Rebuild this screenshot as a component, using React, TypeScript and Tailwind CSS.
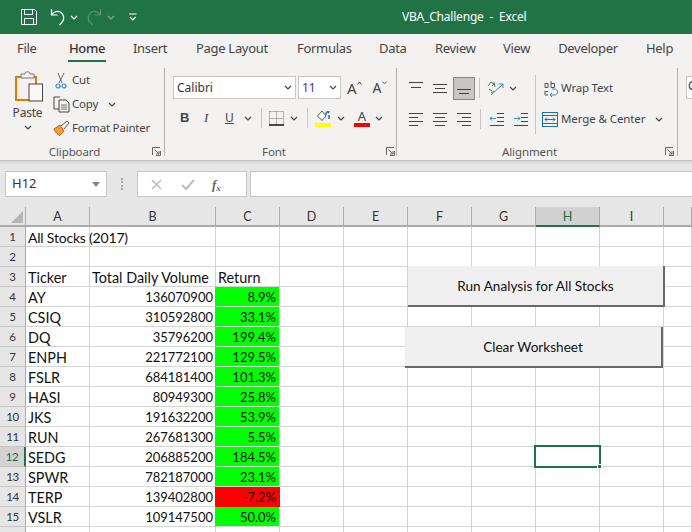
import React from "react";

const ui = "font-['Noto_Sans','Open_Sans',sans-serif]";
const cellFont = "font-['Lato','Noto_Sans',sans-serif]";

const Chev = ({ c = "#444", className = "" }: { c?: string; className?: string }) => (
  <svg width="8" height="5" viewBox="0 0 8 5" className={className}>
    <path d="M1 1l3 3 3-3" fill="none" stroke={c} strokeWidth="1.2" />
  </svg>
);

const Launcher = ({ className = "" }: { className?: string }) => (
  <svg width="9" height="9" viewBox="0 0 9 9" className={className}>
    <path d="M.5 8V.5H8M8.5 4v4.5H4M2.5 2.5L7 7M7 4v3H4" fill="none" stroke="#666" strokeWidth="1" />
  </svg>
);

const TABS = (
  <div className={`flex h-[28px] bg-[#f3f2f1] text-[13px] tracking-[-0.3px] text-[#444] ${ui} items-start`}>
    <div className="w-[52px] pt-[5px] pl-[17px]">File</div>
    <div className="w-[38px] ml-[16px] pt-[5px] h-[28px] text-center relative font-medium text-[#333]">
      Home
      <div className="absolute left-[0px] right-[0px] bottom-[0px] h-[2px] bg-[#217346]" />
    </div>
    <div className="w-[32px] ml-[27px] pt-[5px] text-center">Insert</div>
    <div className="w-[71px] ml-[31px] pt-[5px] text-center whitespace-nowrap">Page Layout</div>
    <div className="w-[53px] ml-[30px] pt-[5px] text-center">Formulas</div>
    <div className="w-[27px] ml-[29px] pt-[5px] text-center">Data</div>
    <div className="w-[40px] ml-[29px] pt-[5px] text-center">Review</div>
    <div className="w-[27px] ml-[28px] pt-[5px] text-center">View</div>
    <div className="w-[60px] ml-[28px] pt-[5px] text-center">Developer</div>
    <div className="w-[27px] ml-[28px] pt-[5px] text-center">Help</div>
  </div>
);

const TitleBar = () => (
  <div className={`h-[34px] bg-[#217346] flex items-center text-white ${ui}`}>
    <svg width="18" height="18" viewBox="0 0 18 18" className="ml-[20px]">
      <path d="M1.5 1.5h13l2 2v13h-15z" fill="none" stroke="#fff" />
      <path d="M4.5 1.5v5h8v-5M4.5 16.5v-6h9v6" fill="none" stroke="#fff" />
    </svg>
    <svg width="17" height="18" viewBox="0 0 17 18" className="ml-[12px]">
      <path d="M1.5 1v6h6M1.5 7C4 3.5 8 2.5 11 4.5c3 2 3.6 6.500 1.500 9l-3 3.500" fill="none" stroke="#fff" strokeWidth="1.200" />
    </svg>
    <Chev c="#fff" className="ml-[3px]" />
    <svg width="17" height="18" viewBox="0 0 17 18" className="ml-[7px] opacity-40">
      <path d="M15.500 1v6h-6M15.500 7C13 3.500 9 2.500 6 4.500c-3 2-3.600 6.500-1.500 9l3 3.500" fill="none" stroke="#a5c7b4" strokeWidth="1.200" />
    </svg>
    <Chev c="#7fae95" className="ml-[5px]" />
    <svg width="8" height="8" viewBox="0 0 8 8" className="ml-[14px]">
      <path d="M0 1h7.500M1 4l2.800 3L6.600 4" fill="none" stroke="#fff" strokeWidth="1.100" />
    </svg>
    <div className="ml-[265px] text-[12px] tracking-[-0.2px] whitespace-pre">VBA_Challenge  -  Excel</div>
  </div>
);

const GroupLabel = ({ children, w }: { children: string; w: string }) => (
  <div className={`${w} text-center text-[11.5px] tracking-[-0.1px] text-[#555] h-[16px] leading-[16px]`}>{children}</div>
);

const Clipboard = () => (
  <div className="w-[165px] shrink-0 h-[88px] border-r border-[#b3b0ad] mt-[6px] flex flex-col">
    <div className="flex h-[76px] shrink-0">
      <div className="w-[55px] flex flex-col items-center pl-[4px]">
        <svg width="30" height="32" viewBox="0 0 30 32" className="mt-[2px]">
          <path d="M1 7h20v23H1z" fill="#fdf0cf" stroke="#d77b16" strokeWidth="2" />
          <rect x="5" y="8" width="15" height="20" fill="#f3f2f1" />
          <path d="M6 8V4h4c0-3 5-3 5 0h4v4z" fill="#f3f2f1" stroke="#777" />
          <rect x="14" y="14" width="13.500" height="17" fill="#f8f8f8" stroke="#444" />
        </svg>
        <div className="text-[12px] tracking-[-0.2px] text-[#444] mt-[3px] leading-[16px] pr-[4px]">Paste</div>
        <Chev className="mt-[4px] mr-[4px]" />
      </div>
      <div className="flex flex-col text-[11.5px] tracking-[-0.2px] text-[#444]">
        <div className="h-[24px] flex items-center">
          <svg width="12" height="17" viewBox="0 0 12 17">
            <path d="M3 1l4 10M9 1L4 11" stroke="#666" fill="none" />
            <circle cx="3" cy="14" r="2" fill="none" stroke="#2e8bd0" strokeWidth="1.200" />
            <circle cx="9" cy="14" r="2" fill="none" stroke="#2e8bd0" strokeWidth="1.200" />
          </svg>
          <span className="ml-[5px]">Cut</span>
        </div>
        <div className="h-[24px] flex items-center">
          <svg width="17" height="17" viewBox="0 0 17 17" className="-ml-[2px]">
            <path d="M6 13H1V1h6M8 4h5l3 3v9H6V4z" fill="none" stroke="#444" />
            <path d="M8 9h6M8 11h6M8 13h6" stroke="#777" />
          </svg>
          <span className="ml-[2px]">Copy</span>
          <Chev className="ml-[10px]" />
        </div>
        <div className="h-[24px] flex items-center">
          <svg width="17" height="16" viewBox="0 0 17 16" className="-ml-[2px]">
            <path d="M1 9l6-4 4 6-4 4.500C5 15 2 12 1 9z" fill="#ef9c45" stroke="#c75b12" />
            <path d="M8 6l6-5 2 2-5 6" fill="#f3f2f1" stroke="#555" />
          </svg>
          <span className="ml-[2px] whitespace-nowrap">Format Painter</span>
        </div>
      </div>
    </div>
    <div className="flex shrink-0">
      <GroupLabel w="w-[149px]">Clipboard</GroupLabel>
      <Launcher className="ml-[3px] mt-[3px]" />
    </div>
  </div>
);

const Font = () => (
  <div className="w-[232px] shrink-0 h-[88px] border-r border-[#b3b0ad] mt-[6px] flex flex-col">
    <div className="h-[76px] shrink-0 pl-[8px] pt-[8px]">
      <div className="flex items-center h-[23px]">
        <div className="w-[123px] h-[23px] bg-white border border-[#c8c6c4] flex items-center justify-between px-[3px] text-[12px] text-[#333]">
          <span>Calibri</span>
          <Chev />
        </div>
        <div className="w-[43px] h-[23px] ml-[2px] bg-white border border-[#c8c6c4] flex items-center justify-between px-[3px] text-[12px] text-[#5b2d8c]">
          <span>11</span>
          <Chev />
        </div>
        <div className="ml-[6px] flex items-start text-[15px] text-[#444] leading-[20px]">
          A<svg width="5" height="4" viewBox="0 0 5 4" className="mt-[3px]"><path d="M.5 3.500l2-2.500 2 2.500" fill="none" stroke="#444" /></svg>
        </div>
        <div className="ml-[11px] flex items-start text-[14px] text-[#444] leading-[20px]">
          A<svg width="5" height="4" viewBox="0 0 5 4" className="mt-[3px]"><path d="M.5.500l2 2.500 2-2.500" fill="none" stroke="#2e75b6" /></svg>
        </div>
      </div>
      <div className="flex items-center h-[24px] mt-[7px] text-[#444]">
        <span className="ml-[7px] w-[10px] font-bold text-[13px] font-['Liberation_Sans',sans-serif]">B</span>
        <span className="ml-[14px] w-[8px] italic text-[13px] font-['Liberation_Serif',serif]">I</span>
        <span className="ml-[13px] w-[10px] underline text-[12px]">U</span>
        <Chev className="ml-[9px]" />
        <div className="w-px h-[20px] bg-[#c8c6c4] ml-[9px]" />
        <svg width="15" height="15" viewBox="0 0 15 15" className="ml-[7px]">
          <path d="M.5.500h14M.5 7.500h14M.5.500v13M14.500.500v13M7.500.500v13" stroke="#777" strokeDasharray="1 1" fill="none" />
          <path d="M0 14h15" stroke="#000" strokeWidth="1.400" />
        </svg>
        <Chev className="ml-[6px]" />
        <div className="w-px h-[20px] bg-[#c8c6c4] ml-[9px]" />
        <div className="ml-[7px] w-[16px] flex flex-col items-center">
          <svg width="14" height="12" viewBox="0 0 14 12">
            <path d="M6 1L1.500 6 6 10.500 10 6z" fill="#fff" stroke="#555" />
            <path d="M10 5c0-3 1-3.500 3-3l-1 1M13 5v4" fill="none" stroke="#2a6ea6" strokeWidth="1.500" />
          </svg>
          <div className="w-[16px] h-[4px] bg-[#ffff00] mt-[1px]" />
        </div>
        <Chev className="ml-[6px]" />
        <div className="ml-[9px] w-[16px] flex flex-col items-center">
          <span className="text-[13px] leading-[13px] h-[13px]">A</span>
          <div className="w-[16px] h-[4px] bg-[#ff0000]" />
        </div>
        <Chev className="ml-[5px]" />
      </div>
    </div>
    <div className="flex shrink-0">
      <GroupLabel w="w-[218px]">Font</GroupLabel>
      <Launcher className="ml-[3px] mt-[3px]" />
    </div>
  </div>
);

const AlignIcon = ({ a }: { a: "t" | "m" | "b" | "l" | "c" | "r" }) => {
  const rows: Record<string, string> = {
    t: "M1 1.500h14M3 6.500h10",
    m: "M1 3.500h14M3 7.500h10M1 11.500h14",
    b: "M1 8.500h14M3 12.500h10",
    l: "M1 1.500h14M1 5.500h9M1 9.500h14M1 13.500h9",
    c: "M1 1.500h14M3 5.500h10M1 9.500h14M3 13.500h10",
    r: "M1 1.500h14M6 5.500h9M1 9.500h14M6 13.500h9",
  };
  return (
    <svg width="16" height="15" viewBox="0 0 16 15">
      <path d={rows[a]} stroke="#444" fill="none" />
    </svg>
  );
};

const Alignment = () => (
  <div className="w-[281px] shrink-0 h-[88px] border-r border-[#b3b0ad] mt-[6px] flex flex-col">
    <div className="h-[76px] shrink-0 pt-[8px] flex">
      <div className="flex flex-col pl-[11px] w-[132px]">
        <div className="flex items-center h-[24px]">
          <AlignIcon a="t" />
          <div className="ml-[8px]"><AlignIcon a="m" /></div>
          <div className="ml-[5px] w-[22px] h-[23px] bg-[#c8c6c4] border border-[#8a8886] flex items-center justify-center">
            <AlignIcon a="b" />
          </div>
          <div className="w-px h-[20px] bg-[#c8c6c4] ml-[4px]" />
          <svg width="20" height="17" viewBox="0 0 20 17" className="ml-[6px]">
            <path d="M2 6l3-4 3 2-2 2M3 9l3 2M8 2l1 5M5 13l3-2" fill="none" stroke="#666" />
            <path d="M5 15L17 4M17 4v4M17 4h-4" stroke="#2e8bd0" fill="none" />
          </svg>
          <Chev className="ml-[3px]" />
        </div>
        <div className="flex items-center h-[24px] mt-[7px]">
          <AlignIcon a="l" />
          <div className="ml-[8px]"><AlignIcon a="c" /></div>
          <div className="ml-[8px]"><AlignIcon a="r" /></div>
          <div className="w-px h-[20px] bg-[#c8c6c4] ml-[8px]" />
          <svg width="16" height="14" viewBox="0 0 16 14" className="ml-[8px]">
            <path d="M8 1.500h7M8 5.500h7M8 9.500h7M1 13.500h14" stroke="#444" fill="none" />
            <path d="M1 6.500h6M1 6.500l2-2M1 6.500l2 2" stroke="#2e8bd0" fill="none" />
          </svg>
          <svg width="16" height="14" viewBox="0 0 16 14" className="ml-[8px]">
            <path d="M8 1.500h7M8 5.500h7M8 9.500h7M1 13.500h14" stroke="#444" fill="none" />
            <path d="M1 6.500h6M7 6.500l-2-2M7 6.500l-2 2" stroke="#2e8bd0" fill="none" />
          </svg>
        </div>
      </div>
      <div className="w-px h-[59px] bg-[#c8c6c4] ml-[6px] mt-[-1px]" />
      <div className="flex flex-col text-[11.500px] tracking-[-0.2px] text-[#444] pl-[6px]">
        <div className="h-[24px] flex items-center">
          <svg width="16" height="17" viewBox="0 0 16 17" className="ml-[2px]">
            <path d="M1 3.500h3v4H1zM7 1v6.500h3.500v-4H7M1 11.500h3M1 11v4h3" fill="none" stroke="#555" />
            <path d="M6 15h4c5 0 5-6 0-6H8M6 15l2-2M6 15l2 2" stroke="#2e8bd0" fill="none" />
          </svg>
          <span className="ml-[1px] whitespace-nowrap">Wrap Text</span>
        </div>
        <div className="h-[24px] flex items-center mt-[7px]">
          <svg width="16" height="15" viewBox="0 0 16 15">
            <rect x=".5" y=".5" width="15" height="14" fill="none" stroke="#1e6fb0" />
            <path d="M0 3.500h16M0 11.500h16" stroke="#1e6fb0" />
            <path d="M3 7.500h10M3 7.500l2-2M3 7.500l2 2M13 7.500l-2-2M13 7.500l-2 2" stroke="#1e6fb0" fill="none" />
          </svg>
          <span className="ml-[3px] whitespace-nowrap tracking-[-0.1px]">Merge &amp; Center</span>
          <Chev className="ml-[10px]" />
        </div>
      </div>
    </div>
    <div className="flex shrink-0">
      <GroupLabel w="w-[265px]">Alignment</GroupLabel>
      <Launcher className="ml-[3px] mt-[3px]" />
    </div>
  </div>
);

const Ribbon = () => (
  <div className={`h-[98px] bg-[#f3f2f1] flex overflow-hidden ${ui}`}>
    <Clipboard />
    <Font />
    <Alignment />
    <div className="ml-[8px] mt-[14px] w-[40px] shrink-0 h-[23px] bg-white border border-[#c8c6c4] text-[12px] text-[#333] pl-[1px] overflow-hidden">G</div>
  </div>
);

const FormulaBar = () => (
  <div className={`h-[47px] bg-[#e6e6e6] flex items-start pt-[11px] ${ui} shadow-[inset_0_4px_3px_-3px_rgba(0,0,0,0.25)]`}>
    <div className="ml-[5px] w-[102px] h-[26px] bg-white border border-[#c6c6c6] flex items-center justify-between pl-[6px] pr-[6px] text-[13px] text-[#333]">
      H12
      <svg width="8" height="5" viewBox="0 0 8 5"><path d="M0 0h8L4 5z" fill="#888" /></svg>
    </div>
    <div className="ml-[14px] w-[3px] h-[12px] mt-[7px] border-l-[2px] border-dotted border-[#aaa]" />
    <div className="ml-[13px] w-[110px] h-[26px] bg-white border border-[#c6c6c6] flex items-center">
      <svg width="11" height="11" viewBox="0 0 11 11" className="ml-[13px]"><path d="M1 1l9 9M10 1l-9 9" stroke="#bbb" strokeWidth="1.500" /></svg>
      <svg width="14" height="11" viewBox="0 0 14 11" className="ml-[19px]"><path d="M1 6l4 4 8-9" stroke="#bbb" strokeWidth="2" fill="none" /></svg>
      <span className="ml-[17px] text-[13px] italic font-bold text-[#666] font-['Liberation_Serif',serif] leading-none">f<sub className="text-[9px]">x</sub></span>
    </div>
    <div className="ml-[3px] flex-1 h-[26px] bg-white border-y border-l border-[#c6c6c6]" />
  </div>
);

type Row = [string, string, string, "g" | "r" | ""];
const DATA: Row[] = [
  ["All Stocks (2017)", "", "", ""],
  ["", "", "", ""],
  ["Ticker", "Total Daily Volume", "Return", ""],
  ["AY", "136070900", "8.9%", "g"],
  ["CSIQ", "310592800", "33.1%", "g"],
  ["DQ", "35796200", "199.4%", "g"],
  ["ENPH", "221772100", "129.5%", "g"],
  ["FSLR", "684181400", "101.3%", "g"],
  ["HASI", "80949300", "25.8%", "g"],
  ["JKS", "191632200", "53.9%", "g"],
  ["RUN", "267681300", "5.5%", "g"],
  ["SEDG", "206885200", "184.5%", "g"],
  ["SPWR", "782187000", "23.1%", "g"],
  ["TERP", "139402800", "-7.2%", "r"],
  ["VSLR", "109147500", "50.0%", "g"],
  ["", "", "", ""],
];

const cols = "grid grid-cols-[26px_64px_126px_64px_64px_64px_64px_64px_64px_64px_28px]";
const cell = "border-r border-b border-[#d4d4d4] h-[20px] leading-[21px] overflow-visible whitespace-nowrap";
const head = "border-r border-b-2 border-[#ababab] text-center leading-[19px] h-[20px]";

const Sheet = () => (
  <div className={`relative flex-1 overflow-hidden bg-white ${cellFont} text-[14.4px] text-[#111]`}>
    <div className={`${cols} h-[20px] bg-[#e6e6e6] text-[#333] text-[12.5px]`}>
      <div className="border-r border-b-2 border-[#ababab] relative h-[20px]">
        <svg width="12" height="12" viewBox="0 0 12 12" className="absolute right-[2px] bottom-[2px]"><path d="M12 0v12H0z" fill="#b5b5b5" /></svg>
      </div>
      {["A", "B", "C", "D", "E", "F", "G"].map((c) => (
        <div key={c} className={head}>{c}</div>
      ))}
      <div className="border-r border-b-2 border-r-[#ababab] border-b-[#217346] bg-[#d2d2d2] text-[#1f6b42] text-center leading-[19px] h-[20px]">H</div>
      {["I", ""].map((c, i) => (
        <div key={i} className={head}>{c}</div>
      ))}
    </div>
    {DATA.map((r, i) => {
      const sel = i === 11;
      const fill = r[3] === "g" ? "bg-[#00ff00] border-[#00ff00]" : r[3] === "r" ? "bg-[#ff0000] border-[#ff0000]" : "";
      const edge = r[3] === "g" ? "border-r-[#00ff00]" : r[3] === "r" ? "border-r-[#ff0000]" : "";
      const isHead = r[0] === "Ticker";
      return (
        <div key={i} className={cols}>
          <div className={`${sel ? "bg-[#d2d2d2] text-[#1f6b42] border-r-2 border-r-[#217346] border-b-[#c0c0c0]" : "bg-[#e6e6e6] text-[#333] border-r border-r-[#ababab] border-b-[#c6c6c6]"} border-b h-[20px] leading-[19px] text-center text-[11.5px] tracking-[-0.3px]`}>
            {i < 15 ? i + 1 : ""}
          </div>
          <div className={`${cell} pl-[2px] ${i === 0 ? "text-[14px] tracking-[-0.2px]" : ""}`}>{r[0]}</div>
          <div className={`${cell} ${edge} ${isHead ? "text-left pl-[2px]" : "text-right pr-[2px] text-[13px]"}`}>{r[1]}</div>
          <div className={`${cell} ${fill} ${isHead ? "text-left pl-[2px]" : "text-right pr-[3px] text-[13px]"}`}>{r[2]}</div>
          {[0, 1, 2, 3, 4, 5, 6].map((k) => <div key={k} className={cell} />)}
        </div>
      );
    })}
    <button className="absolute left-[408px] top-[59px] w-[257px] h-[41px] pt-[2px] bg-[#f0f0f0] border-r-2 border-b-2 border-[#696969] text-[13.600px] text-[#111]">
      Run Analysis for All Stocks
    </button>
    <button className="absolute left-[405px] top-[120px] w-[258px] h-[41px] pt-[2px] bg-[#f0f0f0] border-r-2 border-b-2 border-[#696969] text-[13.600px] text-[#111]">
      Clear Worksheet
    </button>
    <div className="absolute left-[534px] top-[238px] w-[67px] h-[23px] border-2 border-[#217346]">
      <div className="absolute right-[-3px] bottom-[-3px] w-[5px] h-[5px] bg-[#217346] border border-white" />
    </div>
  </div>
);

export default function App() {
  return (
    <div className="w-[692px] h-[532px] overflow-hidden flex flex-col bg-white">
      <TitleBar />
      {TABS}
      <Ribbon />
      <FormulaBar />
      <Sheet />
    </div>
  );
}
